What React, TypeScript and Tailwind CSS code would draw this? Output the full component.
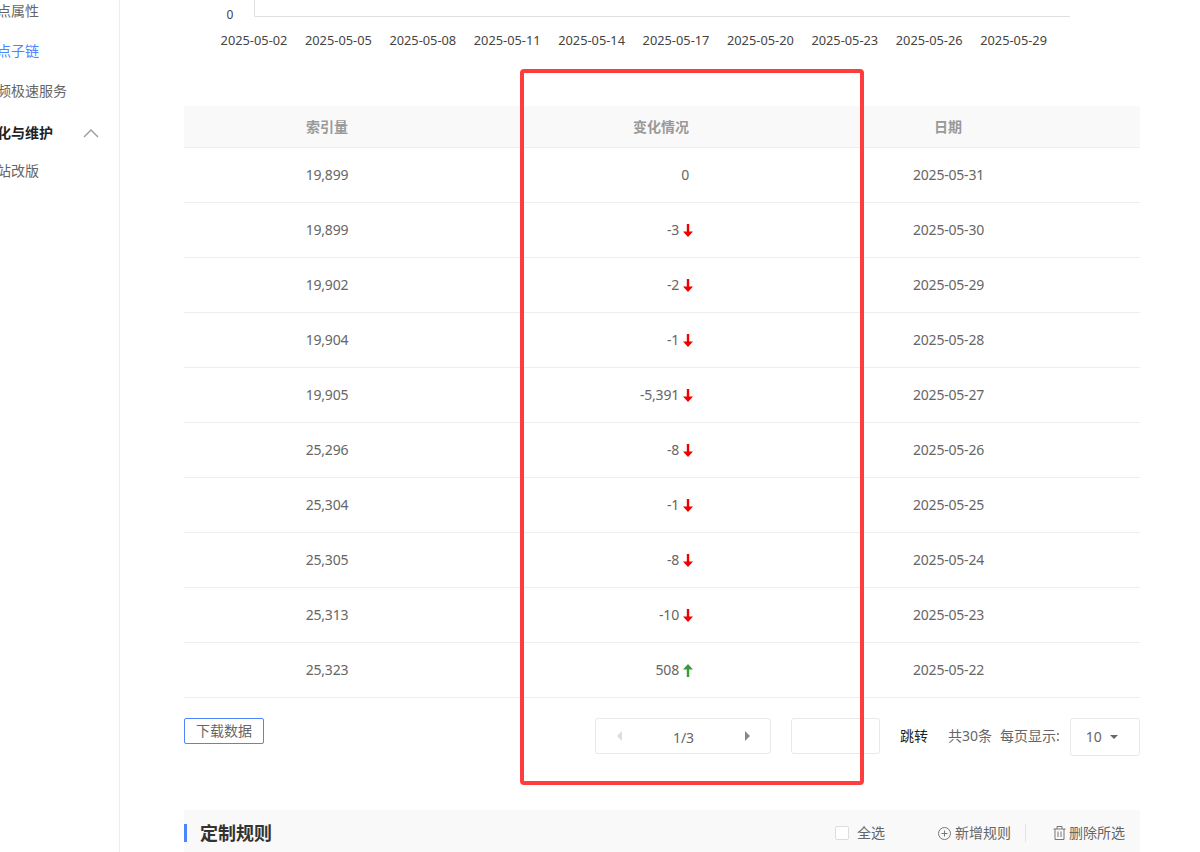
const DATES = ["2025-05-02", "2025-05-05", "2025-05-08", "2025-05-11", "2025-05-14", "2025-05-17", "2025-05-20", "2025-05-23", "2025-05-26", "2025-05-29"];

const ROWS = [
  { count: "19,899", change: "0", date: "2025-05-31" },
  { count: "19,899", change: "-3", date: "2025-05-30" },
  { count: "19,902", change: "-2", date: "2025-05-29" },
  { count: "19,904", change: "-1", date: "2025-05-28" },
  { count: "19,905", change: "-5,391", date: "2025-05-27" },
  { count: "25,296", change: "-8", date: "2025-05-26" },
  { count: "25,304", change: "-1", date: "2025-05-25" },
  { count: "25,305", change: "-8", date: "2025-05-24" },
  { count: "25,313", change: "-10", date: "2025-05-23" },
  { count: "25,323", change: "508", date: "2025-05-22" },
];

function Arrow({ up }: { up: boolean }) {
  return (
    <svg width="10" height="13" viewBox="0 0 10 13" className={up ? "ml-[4px]" : "ml-[4px] rotate-180"}>
      <path d="M5 0 L10 5.5 H6.2 V13 H3.8 V5.5 H0 Z" fill={up ? "#3c9a3c" : "#f00000"} />
    </svg>
  );
}

function Chart() {
  return (
    <svg width="956" height="60" className="block">
      <path d="M70.5 0 V16.5 H886" fill="none" stroke="#e0e0e0" />
      <text x="46" y="19" fontSize="12" fill="#444" textAnchor="middle">0</text>
      {DATES.map((d, i) => (
        <text key={d} x={70 + i * 84.4} y="45" fontSize="12.8" fill="#444" textAnchor="middle">{d}</text>
      ))}
    </svg>
  );
}

function Sidebar() {
  return (
    <div className="w-[120px] shrink-0 border-r border-[#ececec] text-sm text-[#666] overflow-hidden">
      <div className="-ml-[17px] flex flex-col whitespace-nowrap">
        <div className="h-[40px] leading-[22px]">节点属性</div>
        <div className="h-[40px] leading-[22px] text-[#4d84ff]">节点子链</div>
        <div className="h-[42px] leading-[22px]">视频极速服务</div>
        <div className="h-[38px] leading-[22px] font-bold text-[#222] flex items-start w-[136px] justify-between pr-[20px]">
          优化与维护
          <svg width="16" height="10" viewBox="0 0 16 10" className="mt-[6px]">
            <path d="M1 9 L8 2 L15 9" fill="none" stroke="#999" strokeWidth="1.4" />
          </svg>
        </div>
        <div className="h-[40px] leading-[22px]">网站改版</div>
      </div>
    </div>
  );
}

function DataTable() {
  return (
    <div className="text-sm text-[#666]">
      <div className="grid grid-cols-[286px_286px_384px] h-[42px] items-center bg-[#f9f9f9] border-b border-[#eeeeee] font-bold text-[#999]">
        <div className="text-center">索引量</div>
        <div className="text-center pl-[96px]">变化情况</div>
        <div className="text-center">日期</div>
      </div>
      {ROWS.map((r) => {
        const isZero = r.change === "0";
        const up = !r.change.startsWith("-");
        return (
          <div key={r.date} className="grid grid-cols-[286px_286px_384px] h-[55px] items-center border-b border-[#eeeeee] tracking-[-0.2px]">
            <div className="text-center">{r.count}</div>
            <div className={isZero ? "flex justify-end items-center pr-[67px]" : "flex justify-end items-center pr-[63px]"}>
              {r.change}
              {!isZero && <Arrow up={up} />}
            </div>
            <div className="text-center pl-[1px]">{r.date}</div>
          </div>
        );
      })}
    </div>
  );
}

function Pager() {
  return (
    <div className="flex items-start mt-[20px] h-[38px] text-sm text-[#666]">
      <button className="w-[80px] h-[26px] border border-[#4d84ff] rounded-[2px] text-sm leading-[24px] text-[#666]">下载数据</button>
      <div className="ml-[331px] w-[176px] h-[36px] border border-[#e8e8e8] rounded-[3px] flex items-center justify-between pl-[21px] pr-[20px]">
        <span className="w-0 h-0 border-y-[5px] border-y-transparent border-r-[5px] border-r-[#ddd]" />
        <span className="mt-[4px]">1/3</span>
        <span className="w-0 h-0 border-y-[5px] border-y-transparent border-l-[5px] border-l-[#888]" />
      </div>
      <div className="ml-[20px] w-[89px] h-[36px] border border-[#e8e8e8] rounded-[3px]" />
      <span className="ml-[20px] h-[36px] leading-[36px] text-[#222]">跳转</span>
      <span className="ml-[20px] h-[36px] leading-[36px]">共30条</span>
      <span className="ml-[8px] h-[36px] leading-[36px]">每页显示:</span>
      <div className="ml-[10px] w-[70px] h-[38px] border border-[#e8e8e8] rounded-[3px] flex items-center pl-[15px] gap-[8px]">
        10
        <span className="w-0 h-0 border-x-[4px] border-x-transparent border-t-[4px] border-t-[#666]" />
      </div>
    </div>
  );
}

function RulesHeader() {
  return (
    <div className="mt-[54px] h-[46px] shrink-0 bg-[#f9f9f9] flex items-center text-sm text-[#666] pr-[15px]">
      <div className="w-[3px] h-[18px] bg-[#4d84ff]" />
      <div className="ml-[13px] text-lg font-bold text-[#333]">定制规则</div>
      <div className="ml-auto w-[14px] h-[14px] border border-[#ddd] rounded-[2px] bg-white" />
      <span className="ml-[8px]">全选</span>
      <svg width="13" height="13" viewBox="0 0 13 13" className="ml-[53px]">
        <circle cx="6.5" cy="6.5" r="6" fill="none" stroke="#777" />
        <path d="M6.5 3.5 V9.5 M3.5 6.5 H9.5" stroke="#777" />
      </svg>
      <span className="ml-[4px]">新增规则</span>
      <div className="ml-[14px] w-px h-[18px] bg-[#e4e4e4]" />
      <svg width="13" height="14" viewBox="0 0 13 14" className="ml-[27px]">
        <path d="M0.5 3 H12.5 M4 3 V0.5 H9 V3 M2 3 V13.5 H11 V3 M5 5.5 V11 M8 5.5 V11" fill="none" stroke="#777" />
      </svg>
      <span className="ml-[3px]">删除所选</span>
    </div>
  );
}

export default function App() {
  return (
    <div className="relative h-[852px] w-[1200px] overflow-hidden bg-white flex font-['Noto_Sans','Noto_Sans_CJK_SC',sans-serif]">
      <Sidebar />
      <div className="ml-[64px] w-[956px]">
        <Chart />
        <div className="mt-[46px]">
          <DataTable />
        </div>
        <Pager />
        <RulesHeader />
      </div>
      {/* annotation drawn over the screenshot */}
      <div className="absolute left-[520px] top-[69px] w-[344px] h-[716px] border-[4px] border-[#ff3d3d] rounded-[4px]" />
    </div>
  );
}
